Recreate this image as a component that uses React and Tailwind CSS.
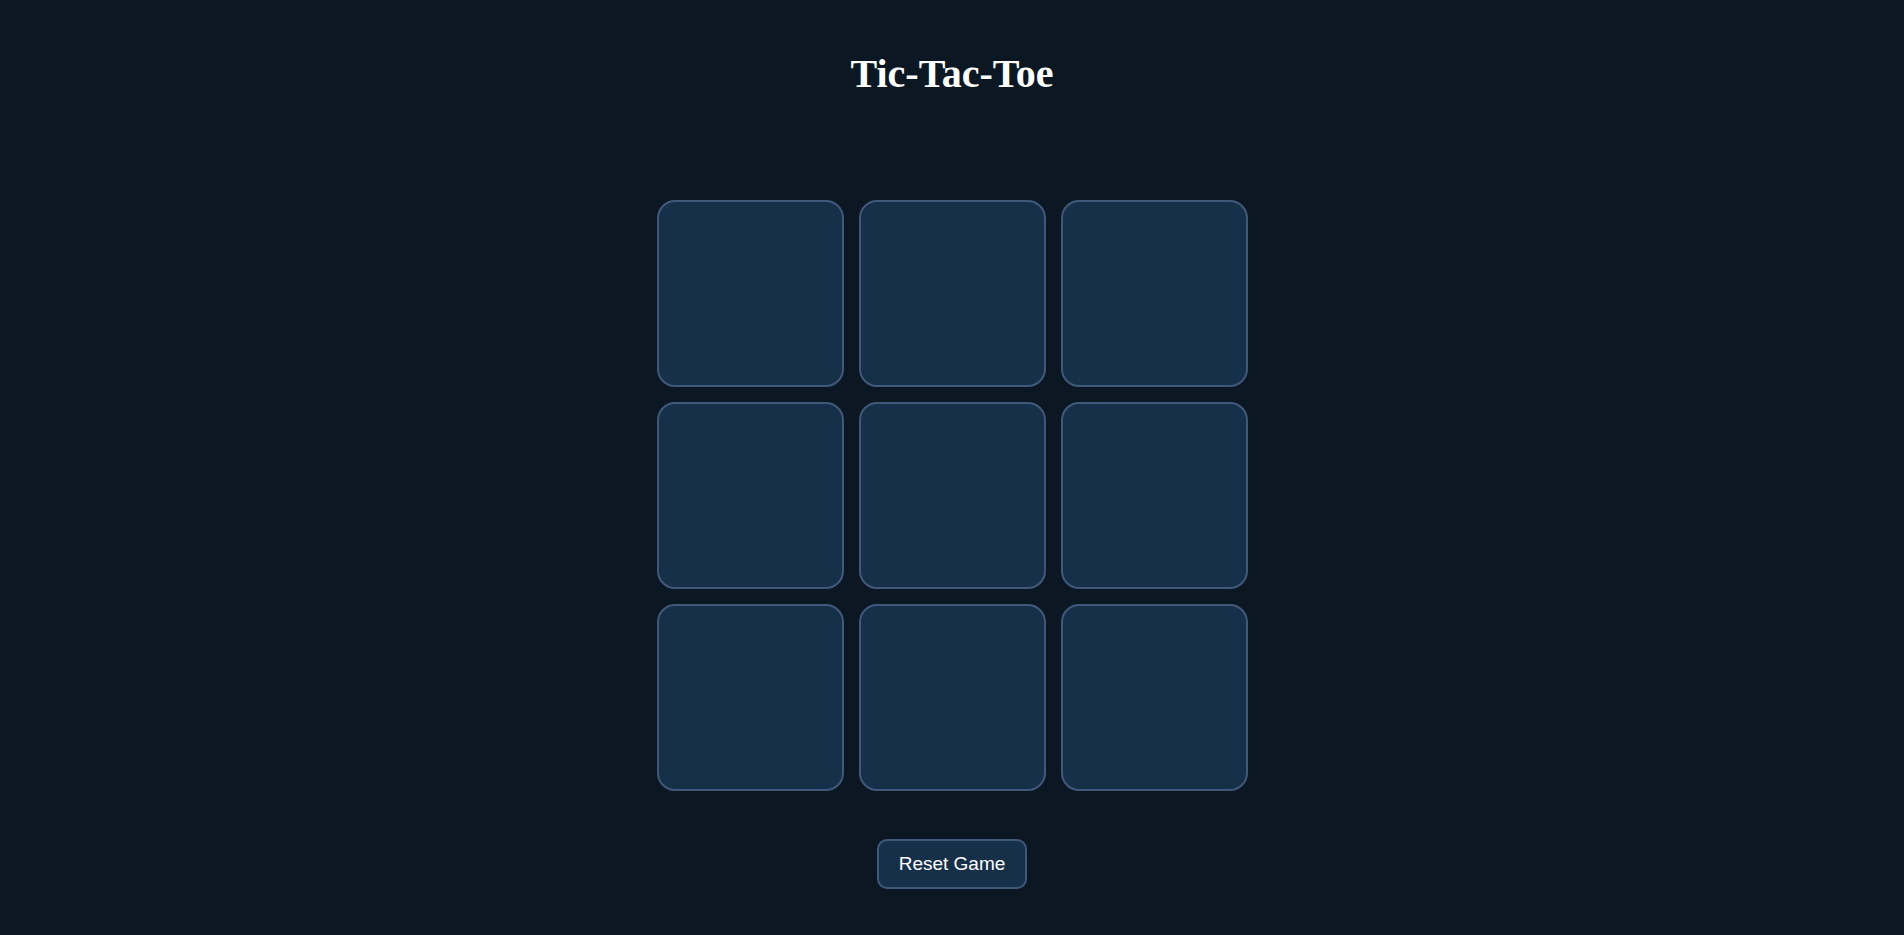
import React, { useState } from "react";

/**
 * App — a plain 3x3 tic-tac-toe board with a reset button underneath.
 */
export default function App() {
  const [board, setBoard] = useState(Array(9).fill(null));
  const [xNext, setXNext] = useState(true);

  const play = (i) => {
    if (board[i]) return;
    const next = board.slice();
    next[i] = xNext ? "X" : "O";
    setBoard(next);
    setXNext(!xNext);
  };

  const reset = () => {
    setBoard(Array(9).fill(null));
    setXNext(true);
  };

  return (
    <div className="min-h-[935px] w-full bg-[#0b1723] flex flex-col items-center">
      <h1 className="mt-[50px] text-[40px] leading-[48px] font-bold text-white font-['Liberation_Serif',serif]">
        Tic-Tac-Toe
      </h1>

      <div className="mt-[102px] grid grid-cols-[repeat(3,187px)] gap-[15px]">
        {board.map((v, i) => (
          <button
            key={i}
            onClick={() => play(i)}
            className="w-[187px] h-[187px] rounded-[18px] border-2 border-[#40597a] bg-[#17304a] text-white text-6xl font-bold font-['Liberation_Sans',sans-serif] flex items-center justify-center"
          >
            {v}
          </button>
        ))}
      </div>

      <button
        onClick={reset}
        className="mt-[48px] h-[50px] px-[20px] rounded-[10px] border-2 border-[#40597a] bg-[#17304a] text-white text-[19px] font-['Liberation_Sans',sans-serif]"
      >
        Reset Game
      </button>
    </div>
  );
}
